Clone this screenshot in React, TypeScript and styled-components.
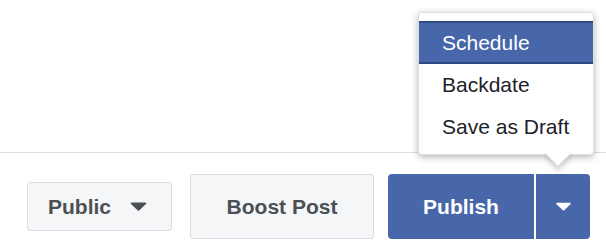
import styled, { createGlobalStyle } from "styled-components";

const GlobalStyle = createGlobalStyle`
  html, body {
    margin: 0;
    padding: 0;
    background: #ffffff;
  }
  body {
    font-family: "Liberation Sans", Arial, Helvetica, sans-serif;
  }
`;

const Page = styled.div`
  width: 606px;
  height: 250px;
  background: #ffffff;
  overflow: hidden;
`;

const Composer = styled.div`
  height: 152px;
`;

const Footer = styled.div`
  display: flex;
  align-items: center;
  border-top: 1px solid #dddfe2;
  padding: 21px 16px 0 27px;
`;

const Button = styled.button<{ $tall?: boolean }>`
  display: flex;
  align-items: center;
  justify-content: center;
  box-sizing: border-box;
  height: ${(p) => (p.$tall ? "65px" : "49px")};
  margin: 0;
  border: 1.5px solid #dadde1;
  border-radius: 3px;
  background: #f5f6f7;
  color: #4b4f56;
  font-family: inherit;
  font-size: 21px;
  font-weight: bold;
  cursor: pointer;
`;

const PrivacyButton = styled(Button)`
  width: 145px;
  justify-content: flex-start;
  padding: 0 0 0 20px;
  gap: 19px;
`;

const BoostButton = styled(Button)`
  width: 184px;
  margin-left: 18px;
`;

const SplitButton = styled.div`
  position: relative;
  display: flex;
  gap: 2px;
  margin-left: 14px;
`;

const PrimaryButton = styled.button<{ $width: number; $side: "left" | "right" }>`
  display: flex;
  align-items: center;
  justify-content: center;
  width: ${(p) => p.$width}px;
  height: 65px;
  margin: 0;
  padding: 0;
  border: none;
  border-radius: ${(p) => (p.$side === "left" ? "4px 0 0 4px" : "0 4px 4px 0")};
  background: #4867aa;
  color: #ffffff;
  font-family: inherit;
  font-size: 21px;
  font-weight: bold;
  cursor: pointer;
`;

const Menu = styled.ul`
  position: absolute;
  right: -4px;
  bottom: calc(100% + 19px);
  box-sizing: border-box;
  width: 176px;
  margin: 0;
  padding: 8px 0 6px;
  list-style: none;
  background: #ffffff;
  border: 1px solid rgba(0, 0, 0, 0.12);
  border-radius: 4px;
  box-shadow: 0 2px 7px rgba(0, 0, 0, 0.3);

  &::after {
    content: "";
    position: absolute;
    right: 26px;
    bottom: -9px;
    width: 17px;
    height: 17px;
    background: #ffffff;
    transform: rotate(45deg);
    box-shadow: 3px 3px 5px rgba(0, 0, 0, 0.18);
    border-right: 1px solid rgba(0, 0, 0, 0.1);
    border-bottom: 1px solid rgba(0, 0, 0, 0.1);
  }
`;

const MenuItem = styled.li<{ $active?: boolean }>`
  position: relative;
  z-index: 1;
  display: flex;
  align-items: center;
  box-sizing: border-box;
  height: ${(p) => (p.$active ? "43px" : "42px")};
  padding: 0 0 0 23px;
  font-size: 21px;
  color: ${(p) => (p.$active ? "#ffffff" : "#1d2129")};
  background: ${(p) => (p.$active ? "#4867aa" : "transparent")};
  border-top: 2px solid ${(p) => (p.$active ? "#2f4a83" : "transparent")};
  border-bottom: 2px solid ${(p) => (p.$active ? "#2f4a83" : "transparent")};
  white-space: nowrap;
`;

const Caret = ({ color, width }: { color: string; width: number }) => (
  <svg width={width} height={9} viewBox="0 0 16 9" aria-hidden="true">
    <path d="M1.2 0.5h13.6c0.9 0 1.3 1 0.7 1.6L8.7 8.4c-0.4 0.4-1 0.4-1.4 0L0.5 2.1C-0.1 1.5 0.3 0.5 1.2 0.5z" fill={color} />
  </svg>
);

const menuItems = ["Schedule", "Backdate", "Save as Draft"];

export default function App() {
  return (
    <Page>
      <GlobalStyle />
      <Composer />
      <Footer>
        <PrivacyButton>
          Public
          <Caret color="#4b4f56" width={17} />
        </PrivacyButton>
        <BoostButton $tall>Boost Post</BoostButton>
        <SplitButton>
          <PrimaryButton $width={146} $side="left">
            Publish
          </PrimaryButton>
          <PrimaryButton $width={54} $side="right">
            <Caret color="#ffffff" width={15} />
          </PrimaryButton>
          <Menu>
            {menuItems.map((item, i) => (
              <MenuItem key={item} $active={i === 0}>
                {item}
              </MenuItem>
            ))}
          </Menu>
        </SplitButton>
      </Footer>
    </Page>
  );
}
